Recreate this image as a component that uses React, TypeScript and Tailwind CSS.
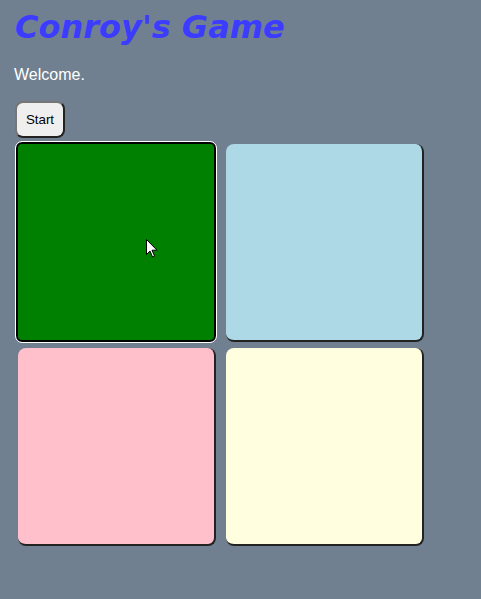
const CELLS = [
  { color: "bg-[#008000]", active: true },
  { color: "bg-[#add8e6]", active: false },
  { color: "bg-[#ffc0cb]", active: false },
  { color: "bg-[#ffffe0]", active: false },
];

const Cursor = () => (
  <svg width="12" height="19" viewBox="0 0 12 19" className="absolute left-[146px] top-[239px]">
    <path d="M0.5 0.5 L0.5 15.5 L4 12 L6.5 18 L8.5 17 L6 11.2 L11 11.2 Z" fill="white" stroke="black" strokeWidth="1" />
  </svg>
);

export default function App() {
  return (
    <div
      className="relative min-h-[599px] w-full bg-[#708090] pl-[14px] pt-[8px]"
      style={{ fontFamily: "'Liberation Sans', Arial, sans-serif" }}
    >
      <h1
        className="m-0 ml-[1px] text-[32px] font-bold italic leading-[38px] text-[#3c3cff]"
        style={{ fontFamily: "'DejaVu Sans', Verdana, sans-serif" }}
      >
        Conroy's Game
      </h1>
      <p className="mt-[20px] text-[16px] leading-[18px] text-white">Welcome.</p>
      <button className="mt-[17px] ml-[1px] h-[37px] w-[50px] rounded-[8px] border-2 border-[#767676] border-r-[#222] border-b-[#222] bg-[#efefef] text-[13.33px] text-black">
        Start
      </button>
      <div className="mt-[4px] ml-[2px] flex w-[420px] flex-wrap gap-x-[8px] gap-y-[4px]">
        {CELLS.map((c, i) =>
          c.active ? (
            <div
              key={i}
              className={`h-[200px] w-[200px] rounded-[6px] border-2 border-black outline outline-1 outline-white ${c.color}`}
            />
          ) : (
            <div key={i} className="h-[200px] w-[200px] pl-[2px] pt-[2px]">
              <div
                className={`h-[198px] w-[198px] rounded-[8px] border-r-2 border-b-2 border-[#222] ${c.color}`}
              />
            </div>
          )
        )}
      </div>
      <Cursor />
    </div>
  );
}
